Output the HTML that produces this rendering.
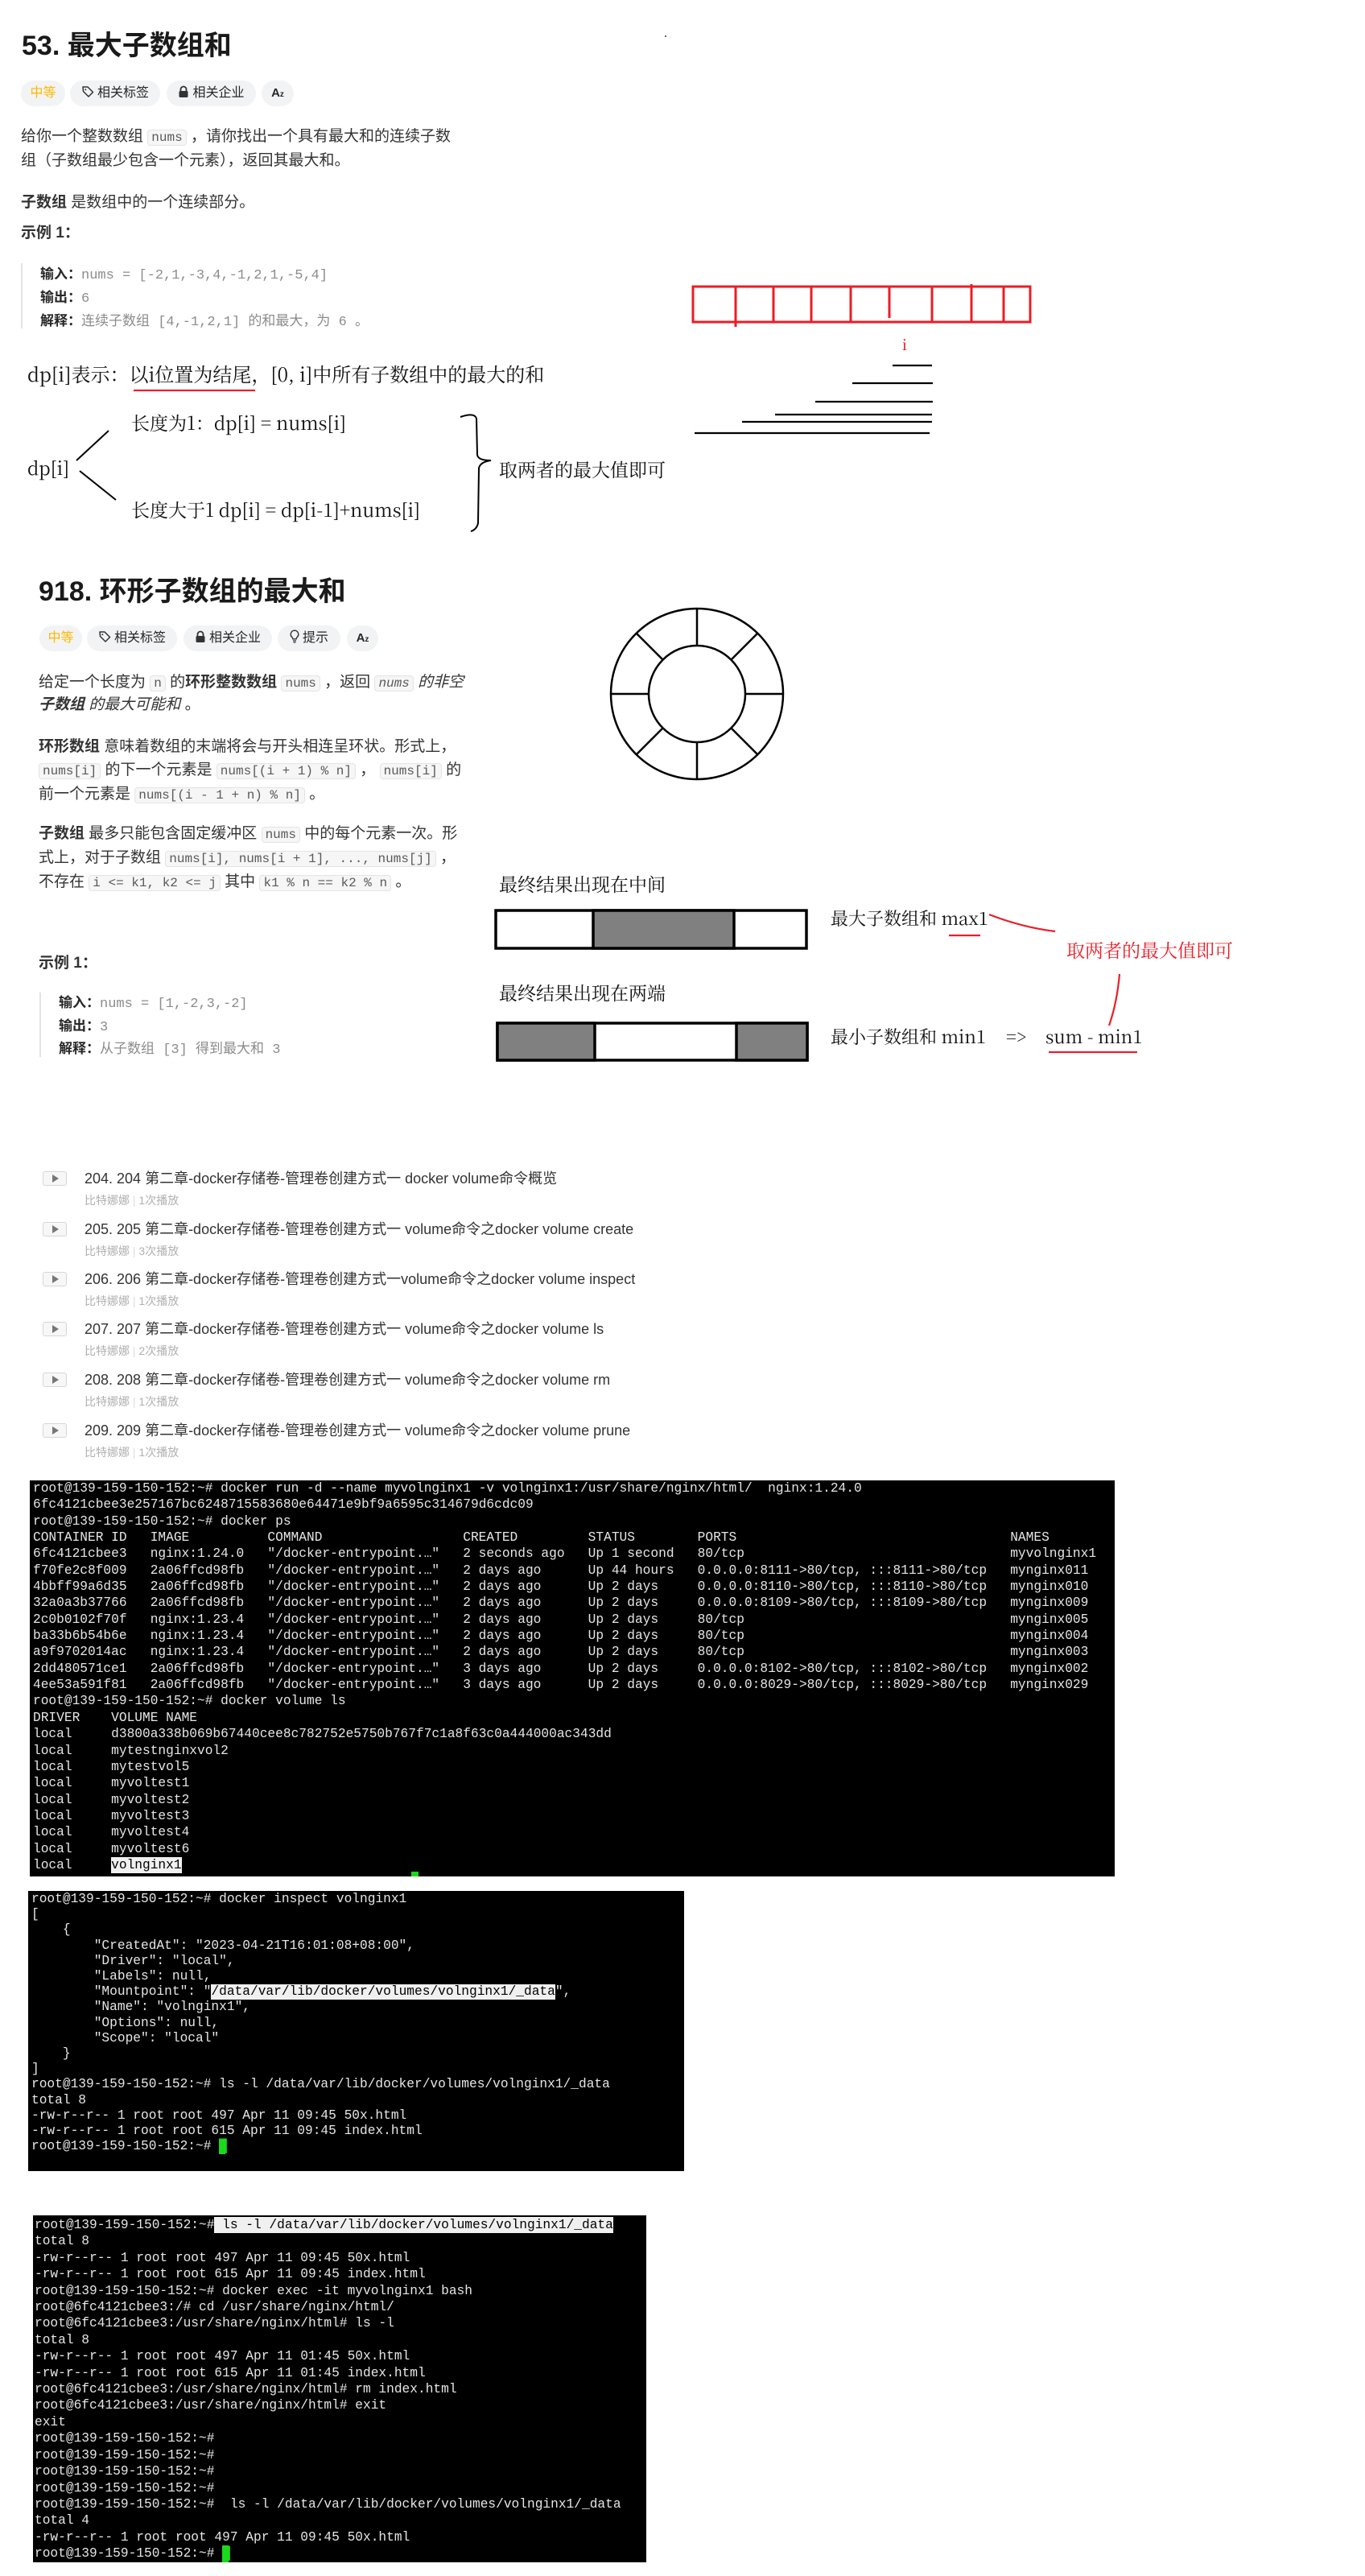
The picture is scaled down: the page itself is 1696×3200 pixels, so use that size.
<!DOCTYPE html>
<html><head><meta charset="utf-8">
<style>
*{margin:0;padding:0;box-sizing:border-box}
html,body{width:1696px;height:3200px;background:#fff;overflow:hidden}
body{position:relative;font-family:"Liberation Sans","Noto Sans CJK SC",sans-serif;color:#262626}
.a{position:absolute;white-space:nowrap}
.t{font-size:34px;font-weight:bold;line-height:40px;color:#1a1a1a}
.pill{position:absolute;height:32px;line-height:32px;border-radius:16px;background:#f2f3f4;font-size:16px;color:#262626;text-align:center;white-space:nowrap}
.pill svg{vertical-align:-2px;margin-right:4px}
.p{font-size:19px;color:#333;line-height:30px}
code{font-family:"Liberation Mono",monospace;font-size:16px;background:#f6f6f6;border:1px solid #e4e4e4;border-radius:4px;padding:0 4px;color:#5a5a5a}
.pre{position:absolute;border-left:2px solid #e3e3e3}
.pre div{font-family:"Liberation Mono","Noto Sans CJK SC",monospace;font-size:17px;color:#8c8c8c;white-space:nowrap}
.pre b{font-family:"Liberation Sans","Noto Sans CJK SC",sans-serif;color:#262626}
.s{font-family:"Noto Serif CJK SC","Liberation Serif",serif;color:#111;font-size:23px;line-height:30px}
.vt{font-size:18px;color:#333;line-height:24px}
.vs{font-size:14px;color:#b0b0b0;line-height:18px}
.play{position:absolute;width:30px;height:18px;border:1px solid #d6d6d6;border-radius:3px;background:#f7f7f7}
.play:after{content:"";position:absolute;left:11px;top:3px;border-left:8px solid #777;border-top:5px solid transparent;border-bottom:5px solid transparent}
.term{position:absolute;background:#000}
.term pre{position:absolute;font-family:"Liberation Mono",monospace;font-size:16.2px;color:#e6e6e6}
.term span{display:inline-block}
.c0,.c1{width:15ch}.c2{width:25ch}.c3{width:16ch}.c4{width:14ch}.c5{width:40ch}.v0{width:10ch}
.hl{background:#f0f0f0;color:#000}
.cur{display:inline-block;width:0.8ch;background:#1bd91b;color:#1bd91b}
</style></head><body>

<div class="a t" style="left:27px;top:37px">53. 最大子数组和</div>
<div class="pill" style="left:26px;top:100px;width:55px;color:#ffb800">中等</div>
<div class="pill" style="left:87px;top:100px;width:112px"><svg width="16" height="16" viewBox="0 0 16 16"><path d="M2 2h6l6.5 6.5-5.5 5.5L2.5 7.5z" fill="none" stroke="#333" stroke-width="1.5" stroke-linejoin="round"/><circle cx="5.3" cy="5.3" r="1" fill="#333"/></svg>相关标签</div>
<div class="pill" style="left:207px;top:100px;width:111px"><svg width="14" height="16" viewBox="0 0 14 16"><path d="M3.5 7V5a3.5 3.5 0 0 1 7 0v2" fill="none" stroke="#333" stroke-width="1.8"/><rect x="1.5" y="7" width="11" height="8" rx="1.5" fill="#333"/></svg>相关企业</div>
<div class="pill" style="left:325px;top:100px;width:40px;font-weight:bold;font-size:15px">A<span style="font-size:10px">z</span></div>

<div class="a p" style="left:26px;top:155px">给你一个整数数组 <code>nums</code> ，请你找出一个具有最大和的连续子数</div>
<div class="a p" style="left:26px;top:185px">组（子数组最少包含一个元素），返回其最大和。</div>
<div class="a p" style="left:26px;top:237px"><b>子数组</b> 是数组中的一个连续部分。</div>
<div class="a p" style="left:26px;top:275px;font-weight:bold">示例 1：</div>
<div class="pre" style="left:26px;top:327px;height:81px;padding-left:22px;line-height:27px">
<div><b>输入：</b>nums = [-2,1,-3,4,-1,2,1,-5,4]</div>
<div><b>输出：</b>6</div>
<div><b>解释：</b>连续子数组 [4,-1,2,1] 的和最大，为 6 。</div>
</div>

<div class="a s" style="left:34px;top:449px;font-size:24px">dp[i]表示：以i位置为结尾，[0, i]中所有子数组中的最大的和</div>
<div class="a s" style="left:163px;top:510px">长度为1：dp[i] = nums[i]</div>
<div class="a s" style="left:34px;top:566px">dp[i]</div>
<div class="a s" style="left:163px;top:618px">长度大于1 dp[i] = dp[i-1]+nums[i]</div>
<div class="a s" style="left:620px;top:568px">取两者的最大值即可</div>
<div class="a" style="left:1121px;top:416px;color:#e8202a;font-family:'Liberation Serif',serif;font-size:21px">i</div>

<div class="a t" style="left:48px;top:715px">918. 环形子数组的最大和</div>
<div class="pill" style="left:49px;top:777px;width:53px;color:#ffb800">中等</div>
<div class="pill" style="left:108px;top:777px;width:112px"><svg width="16" height="16" viewBox="0 0 16 16"><path d="M2 2h6l6.5 6.5-5.5 5.5L2.5 7.5z" fill="none" stroke="#333" stroke-width="1.5" stroke-linejoin="round"/><circle cx="5.3" cy="5.3" r="1" fill="#333"/></svg>相关标签</div>
<div class="pill" style="left:228px;top:777px;width:110px"><svg width="14" height="16" viewBox="0 0 14 16"><path d="M3.5 7V5a3.5 3.5 0 0 1 7 0v2" fill="none" stroke="#333" stroke-width="1.8"/><rect x="1.5" y="7" width="11" height="8" rx="1.5" fill="#333"/></svg>相关企业</div>
<div class="pill" style="left:345px;top:777px;width:78px"><svg width="12" height="17" viewBox="0 0 12 17"><path d="M6 1.2a4.8 4.8 0 0 0-3 8.5c.6.6.9 1.3.9 2.1h4.2c0-.8.3-1.5.9-2.1A4.8 4.8 0 0 0 6 1.2z" fill="none" stroke="#333" stroke-width="1.4"/><path d="M4 14h4M4.5 16h3" stroke="#333" stroke-width="1.3"/></svg>提示</div>
<div class="pill" style="left:431px;top:777px;width:39px;font-weight:bold;font-size:15px">A<span style="font-size:10px">z</span></div>

<div class="a p" style="left:48px;top:834px;line-height:28px">给定一个长度为 <code>n</code> 的<b>环形整数数组</b> <code>nums</code> ，返回 <code><i>nums</i></code> <i>的非空</i></div>
<div class="a p" style="left:48px;top:862px;line-height:28px"><i><b>子数组</b> 的最大可能和</i> 。</div>
<div class="a p" style="left:48px;top:913px;line-height:29.5px"><b>环形数组</b> 意味着数组的末端将会与开头相连呈环状。形式上，</div>
<div class="a p" style="left:48px;top:942px;line-height:29.5px"><code>nums[i]</code> 的下一个元素是 <code>nums[(i + 1) % n]</code> ， <code>nums[i]</code> 的</div>
<div class="a p" style="left:48px;top:972px;line-height:29.5px">前一个元素是 <code>nums[(i - 1 + n) % n]</code> 。</div>
<div class="a p" style="left:48px;top:1021px"><b>子数组</b> 最多只能包含固定缓冲区 <code>nums</code> 中的每个元素一次。形</div>
<div class="a p" style="left:48px;top:1051px">式上，对于子数组 <code>nums[i], nums[i + 1], ..., nums[j]</code> ，</div>
<div class="a p" style="left:48px;top:1081px">不存在 <code>i &lt;= k1, k2 &lt;= j</code> 其中 <code>k1 % n == k2 % n</code> 。</div>
<div class="a p" style="left:48px;top:1182px;font-weight:bold">示例 1：</div>
<div class="pre" style="left:49px;top:1233px;height:80px;padding-left:22px;line-height:26.5px">
<div><b>输入：</b>nums = [1,-2,3,-2]</div>
<div><b>输出：</b>3</div>
<div><b>解释：</b>从子数组 [3] 得到最大和 3</div>
</div>

<div class="a s" style="left:620px;top:1083px">最终结果出现在中间</div>
<div class="a s" style="left:620px;top:1218px">最终结果出现在两端</div>
<div class="a s" style="left:1032px;top:1126px;font-size:22px">最大子数组和 max1</div>
<div class="a s" style="left:1032px;top:1273px;font-size:22px">最小子数组和 min1</div>
<div class="a s" style="left:1250px;top:1273px;font-size:22px">=&gt;</div>
<div class="a s" style="left:1299px;top:1273px;font-size:22px">sum - min1</div>
<div class="a s" style="left:1325px;top:1165px;color:#e8202a">取两者的最大值即可</div>

<svg class="a" style="left:0;top:0" width="1696" height="1400" viewBox="0 0 1696 1400">
<g stroke="#ed1c24" stroke-width="3" fill="none">
<rect x="861" y="356" width="419" height="44"/>
<path d="M914 356V406M961 356V400M1008 356V400M1057 356V400M1105 356V395M1158 356V400M1207 353V400M1247 356V400"/>
</g>
<g stroke="#000" stroke-width="2.2">
<path d="M1109 454H1158M1059 476H1159M1013 499H1159M963 515H1158M922 524H1158M863 538H1155"/>
</g>
<path d="M166 485H317" stroke="#e8202a" stroke-width="2.2"/>
<g stroke="#000" stroke-width="2" fill="none">
<path d="M95 572L135 535M99 585L144 621"/>
<path d="M572 518Q590 512 592 520L593 565Q594 572 610 572Q596 574 595 582L594 650Q592 658 585 660"/>
</g>
<g stroke="#000" stroke-width="2.5" fill="none">
<ellipse cx="866" cy="862" rx="107" ry="106"/>
<ellipse cx="866" cy="862" rx="60" ry="60"/>
<path d="M866 802V756M866 922V968M926 862H973M806 862H759M908 820L942 786M824 820L790 786M824 904L790 938M908 904L942 938"/>
</g>
<g stroke="#000" stroke-width="3.5">
<rect x="616" y="1131" width="386" height="47" fill="#fff"/>
<rect x="737" y="1131" width="175" height="47" fill="#808080"/>
<rect x="618" y="1271" width="385" height="46" fill="#fff"/>
<rect x="618" y="1271" width="121" height="46" fill="#808080"/>
<rect x="915" y="1271" width="88" height="46" fill="#808080"/>
</g>
<g stroke="#e8202a" stroke-width="2.2" fill="none">
<path d="M1179 1162H1218M1303 1307H1413"/>
<path d="M1229 1136Q1270 1152 1311 1157"/>
<path d="M1391 1210Q1388 1245 1378 1274"/>
</g>
<circle cx="827" cy="45" r="1" fill="#333"/>
</svg>

<div class="play" style="left:53px;top:1455px"></div>
<div class="a vt" style="left:105px;top:1452px">204. 204 第二章-docker存储卷-管理卷创建方式一 docker volume命令概览</div>
<div class="a vs" style="left:105px;top:1482px">比特娜娜 <span style="color:#ddd">|</span> 1次播放</div>
<div class="play" style="left:53px;top:1518px"></div>
<div class="a vt" style="left:105px;top:1515px">205. 205 第二章-docker存储卷-管理卷创建方式一 volume命令之docker volume create</div>
<div class="a vs" style="left:105px;top:1545px">比特娜娜 <span style="color:#ddd">|</span> 3次播放</div>
<div class="play" style="left:53px;top:1580px"></div>
<div class="a vt" style="left:105px;top:1577px">206. 206 第二章-docker存储卷-管理卷创建方式一volume命令之docker volume inspect</div>
<div class="a vs" style="left:105px;top:1607px">比特娜娜 <span style="color:#ddd">|</span> 1次播放</div>
<div class="play" style="left:53px;top:1642px"></div>
<div class="a vt" style="left:105px;top:1639px">207. 207 第二章-docker存储卷-管理卷创建方式一 volume命令之docker volume ls</div>
<div class="a vs" style="left:105px;top:1669px">比特娜娜 <span style="color:#ddd">|</span> 2次播放</div>
<div class="play" style="left:53px;top:1705px"></div>
<div class="a vt" style="left:105px;top:1702px">208. 208 第二章-docker存储卷-管理卷创建方式一 volume命令之docker volume rm</div>
<div class="a vs" style="left:105px;top:1732px">比特娜娜 <span style="color:#ddd">|</span> 1次播放</div>
<div class="play" style="left:53px;top:1768px"></div>
<div class="a vt" style="left:105px;top:1765px">209. 209 第二章-docker存储卷-管理卷创建方式一 volume命令之docker volume prune</div>
<div class="a vs" style="left:105px;top:1795px">比特娜娜 <span style="color:#ddd">|</span> 1次播放</div>

<div class="term" style="left:37px;top:1839px;width:1348px;height:492px">
<pre style="left:4px;top:0;line-height:20.35px">root@139-159-150-152:~# docker run -d --name myvolnginx1 -v volnginx1:/usr/share/nginx/html/  nginx:1.24.0
6fc4121cbee3e257167bc6248715583680e64471e9bf9a6595c314679d6cdc09
root@139-159-150-152:~# docker ps
<span class="c0">CONTAINER ID</span><span class="c1">IMAGE</span><span class="c2">COMMAND</span><span class="c3">CREATED</span><span class="c4">STATUS</span><span class="c5">PORTS</span>NAMES
<span class="c0">6fc4121cbee3</span><span class="c1">nginx:1.24.0</span><span class="c2">"/docker-entrypoint.…"</span><span class="c3">2 seconds ago</span><span class="c4">Up 1 second</span><span class="c5">80/tcp</span>myvolnginx1
<span class="c0">f70fe2c8f009</span><span class="c1">2a06ffcd98fb</span><span class="c2">"/docker-entrypoint.…"</span><span class="c3">2 days ago</span><span class="c4">Up 44 hours</span><span class="c5">0.0.0.0:8111-&gt;80/tcp, :::8111-&gt;80/tcp</span>mynginx011
<span class="c0">4bbff99a6d35</span><span class="c1">2a06ffcd98fb</span><span class="c2">"/docker-entrypoint.…"</span><span class="c3">2 days ago</span><span class="c4">Up 2 days</span><span class="c5">0.0.0.0:8110-&gt;80/tcp, :::8110-&gt;80/tcp</span>mynginx010
<span class="c0">32a0a3b37766</span><span class="c1">2a06ffcd98fb</span><span class="c2">"/docker-entrypoint.…"</span><span class="c3">2 days ago</span><span class="c4">Up 2 days</span><span class="c5">0.0.0.0:8109-&gt;80/tcp, :::8109-&gt;80/tcp</span>mynginx009
<span class="c0">2c0b0102f70f</span><span class="c1">nginx:1.23.4</span><span class="c2">"/docker-entrypoint.…"</span><span class="c3">2 days ago</span><span class="c4">Up 2 days</span><span class="c5">80/tcp</span>mynginx005
<span class="c0">ba33b6b54b6e</span><span class="c1">nginx:1.23.4</span><span class="c2">"/docker-entrypoint.…"</span><span class="c3">2 days ago</span><span class="c4">Up 2 days</span><span class="c5">80/tcp</span>mynginx004
<span class="c0">a9f9702014ac</span><span class="c1">nginx:1.23.4</span><span class="c2">"/docker-entrypoint.…"</span><span class="c3">2 days ago</span><span class="c4">Up 2 days</span><span class="c5">80/tcp</span>mynginx003
<span class="c0">2dd480571ce1</span><span class="c1">2a06ffcd98fb</span><span class="c2">"/docker-entrypoint.…"</span><span class="c3">3 days ago</span><span class="c4">Up 2 days</span><span class="c5">0.0.0.0:8102-&gt;80/tcp, :::8102-&gt;80/tcp</span>mynginx002
<span class="c0">4ee53a591f81</span><span class="c1">2a06ffcd98fb</span><span class="c2">"/docker-entrypoint.…"</span><span class="c3">3 days ago</span><span class="c4">Up 2 days</span><span class="c5">0.0.0.0:8029-&gt;80/tcp, :::8029-&gt;80/tcp</span>mynginx029
root@139-159-150-152:~# docker volume ls
<span class="v0">DRIVER</span>VOLUME NAME
<span class="v0">local</span>d3800a338b069b67440cee8c782752e5750b767f7c1a8f63c0a444000ac343dd
<span class="v0">local</span>mytestnginxvol2
<span class="v0">local</span>mytestvol5
<span class="v0">local</span>myvoltest1
<span class="v0">local</span>myvoltest2
<span class="v0">local</span>myvoltest3
<span class="v0">local</span>myvoltest4
<span class="v0">local</span>myvoltest6
<span class="v0">local</span><span class="hl">volnginx1</span></pre>
<div style="position:absolute;left:474px;top:486px;width:9px;height:6px;background:#1bd91b"></div>
</div>

<div class="term" style="left:35px;top:2349px;width:815px;height:348px">
<pre style="left:4px;top:1px;line-height:19.2px">root@139-159-150-152:~# docker inspect volnginx1
[
    {
        "CreatedAt": "2023-04-21T16:01:08+08:00",
        "Driver": "local",
        "Labels": null,
        "Mountpoint": "<span class="hl">/data/var/lib/docker/volumes/volnginx1/_data</span>",
        "Name": "volnginx1",
        "Options": null,
        "Scope": "local"
    }
]
root@139-159-150-152:~# ls -l /data/var/lib/docker/volumes/volnginx1/_data
total 8
-rw-r--r-- 1 root root 497 Apr 11 09:45 50x.html
-rw-r--r-- 1 root root 615 Apr 11 09:45 index.html
root@139-159-150-152:~# <span class="cur">&#9608;</span></pre>
</div>

<div class="term" style="left:41px;top:2752px;width:762px;height:431px">
<pre style="left:2px;top:2px;line-height:20.4px">root@139-159-150-152:~#<span class="hl"> ls -l /data/var/lib/docker/volumes/volnginx1/_data</span>
total 8
-rw-r--r-- 1 root root 497 Apr 11 09:45 50x.html
-rw-r--r-- 1 root root 615 Apr 11 09:45 index.html
root@139-159-150-152:~# docker exec -it myvolnginx1 bash
root@6fc4121cbee3:/# cd /usr/share/nginx/html/
root@6fc4121cbee3:/usr/share/nginx/html# ls -l
total 8
-rw-r--r-- 1 root root 497 Apr 11 01:45 50x.html
-rw-r--r-- 1 root root 615 Apr 11 01:45 index.html
root@6fc4121cbee3:/usr/share/nginx/html# rm index.html
root@6fc4121cbee3:/usr/share/nginx/html# exit
exit
root@139-159-150-152:~#
root@139-159-150-152:~#
root@139-159-150-152:~#
root@139-159-150-152:~#
root@139-159-150-152:~#  ls -l /data/var/lib/docker/volumes/volnginx1/_data
total 4
-rw-r--r-- 1 root root 497 Apr 11 09:45 50x.html
root@139-159-150-152:~# <span class="cur">&#9608;</span></pre>
</div>

</body></html>
